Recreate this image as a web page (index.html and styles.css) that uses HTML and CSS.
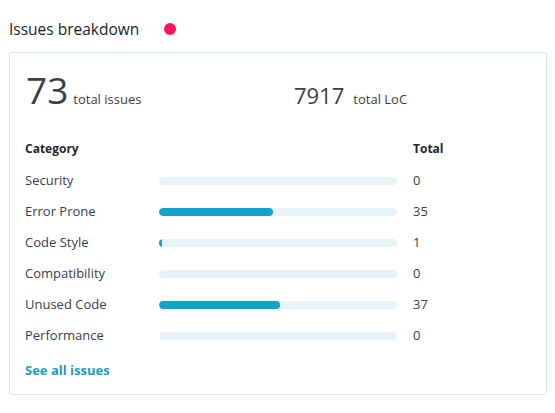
FILE: index.html
```html
<!DOCTYPE html>
<html>
<head>
<meta charset="utf-8">
<link rel="stylesheet" href="styles.css">
</head>
<body>
<div class="widget">
  <div class="header">
    <h2 class="title">Issues breakdown</h2>
    <span class="dot"></span>
  </div>
  <div class="card">
    <div class="stats">
      <div class="stat"><span class="big">73</span><span class="label">total issues</span></div>
      <div class="stat"><span class="mid">7917</span><span class="label">total LoC</span></div>
    </div>
    <div class="table">
      <div class="th">Category</div><div></div><div class="th">Total</div>
      <div class="cat">Security</div><div class="track"><div class="fill" style="width:0%"></div></div><div class="val">0</div>
      <div class="cat">Error Prone</div><div class="track"><div class="fill" style="width:47.9%"></div></div><div class="val">35</div>
      <div class="cat">Code Style</div><div class="track"><div class="fill" style="width:1.4%"></div></div><div class="val">1</div>
      <div class="cat">Compatibility</div><div class="track"><div class="fill" style="width:0%"></div></div><div class="val">0</div>
      <div class="cat">Unused Code</div><div class="track"><div class="fill" style="width:50.7%"></div></div><div class="val">37</div>
      <div class="cat">Performance</div><div class="track"><div class="fill" style="width:0%"></div></div><div class="val">0</div>
    </div>
    <a class="link" href="#">See all issues</a>
  </div>
</div>
</body>
</html>
```

FILE: styles.css
```css
* { box-sizing: border-box; }
body {
  margin: 0;
  background: #fff;
  font-family: "Open Sans", "Noto Sans", sans-serif;
  color: #333c44;
}
.widget {
  padding: 17px 8px 0 9px;
}
.header {
  display: flex;
  align-items: center;
  height: 24px;
  margin-bottom: 11px;
}
.title {
  margin: 0;
  font-size: 15.5px;
  font-weight: 400;
  color: #1b1f24;
  width: 155px;
}
.dot {
  width: 12px;
  height: 12px;
  border-radius: 50%;
  background: #ff1459;
}
.card {
  border: 1px solid #d5e9f1;
  border-bottom-color: #dbe5ea;
  border-radius: 3px;
  padding: 12px 15px 14px 15px;
  height: 343px;
}
.stats {
  display: grid;
  grid-template-columns: 269px auto;
  align-items: baseline;
  height: 50px;
}
.stat { display: flex; align-items: baseline; }
.big {
  font-size: 37px;
  line-height: 50px;
  color: #3a4047;
  margin-right: 5px;
  margin-left: 1px;
}
.mid {
  font-size: 22px;
  color: #3a4047;
  margin-right: 9px;
}
.label {
  font-size: 13px;
  color: #3a4047;
}
.table {
  display: grid;
  grid-template-columns: 118px 238px auto;
  column-gap: 16px;
  grid-auto-rows: 31px;
  align-items: center;
  margin-top: 18px;
  font-size: 13px;
}
.th {
  font-weight: 700;
  font-size: 12px;
  color: #23282e;
}
.cat, .val { color: #3a4047; }
.track {
  height: 8px;
  border-radius: 4px;
  background: #e6f3f8;
  overflow: hidden;
  margin-top: 2px;
}
.fill {
  height: 100%;
  border-radius: 4px;
  background: #12a3ca;
}
.link {
  display: block;
  margin-top: 11px;
  font-size: 13px;
  font-weight: 700;
  color: #1c9cc6;
  text-decoration: none;
}
```
